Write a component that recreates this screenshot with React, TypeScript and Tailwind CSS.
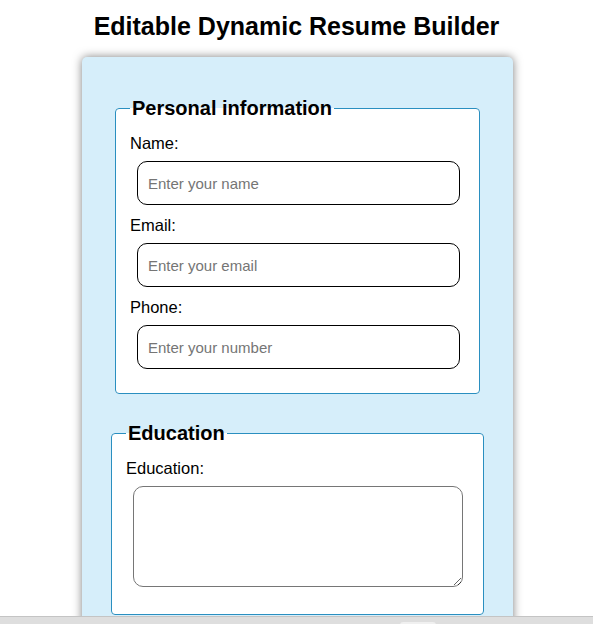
export default function App() {
  return (
    <div className="relative h-[624px] overflow-hidden bg-white font-['Liberation_Sans',Arial,sans-serif] text-black">
      <h1 className="pt-[12px] text-center text-[25px] font-bold leading-[29px]">Editable Dynamic Resume Builder</h1>

      <div className="ml-[82px] mt-[16px] w-[431px] rounded-[5px] bg-[#d6eefa] pt-[40px] pb-[30px] shadow-[0_0_10px_rgba(0,0,0,0.5)]">
        {/* Personal information */}
        <fieldset className="mx-[33px] rounded-[4px] border border-[#2a8fc0] bg-white px-[14px] pb-[13px]">
          <legend className="px-[2px] text-[20px] font-bold leading-[23px]">Personal information</legend>
          <div className="mt-[14px] flex flex-col">
            <label className="text-[16.5px] leading-[18px]">Name:</label>
            <input
              type="text"
              placeholder="Enter your name"
              className="ml-[7px] mr-[5px] mt-[9px] mb-[11px] h-[44px] rounded-[10px] border border-black px-[10px] text-[15px] placeholder:text-[#757575]"
            />
            <label className="text-[16.5px] leading-[18px]">Email:</label>
            <input
              type="email"
              placeholder="Enter your email"
              className="ml-[7px] mr-[5px] mt-[9px] mb-[11px] h-[44px] rounded-[10px] border border-black px-[10px] text-[15px] placeholder:text-[#757575]"
            />
            <label className="text-[16.5px] leading-[18px]">Phone:</label>
            <input
              type="tel"
              placeholder="Enter your number"
              className="ml-[7px] mr-[5px] mt-[9px] mb-[11px] h-[44px] rounded-[10px] border border-black px-[10px] text-[15px] placeholder:text-[#757575]"
            />
          </div>
        </fieldset>

        {/* Education */}
        <fieldset className="mx-[29px] mt-[28px] rounded-[4px] border border-[#2a8fc0] bg-white px-[14px] pb-[27px]">
          <legend className="px-[2px] text-[20px] font-bold leading-[23px]">Education</legend>
          <div className="mt-[14px] flex flex-col">
            <label className="text-[16.5px] leading-[18px]">Education:</label>
            <textarea className="ml-[7px] mr-[6px] mt-[9px] h-[101px] rounded-[10px] border border-[#767676] p-[8px] text-[15px]" />
          </div>
        </fieldset>
      </div>

      {/* bottom scroll strip */}
      <div className="absolute bottom-0 left-0 right-0 h-[8px] border-t border-[#c4c4c4] bg-[#dedede]">
        <div className="absolute left-[400px] top-[5px] h-[6px] w-[36px] rounded-[3px] bg-[#f0f0f0]" />
      </div>
    </div>
  );
}
